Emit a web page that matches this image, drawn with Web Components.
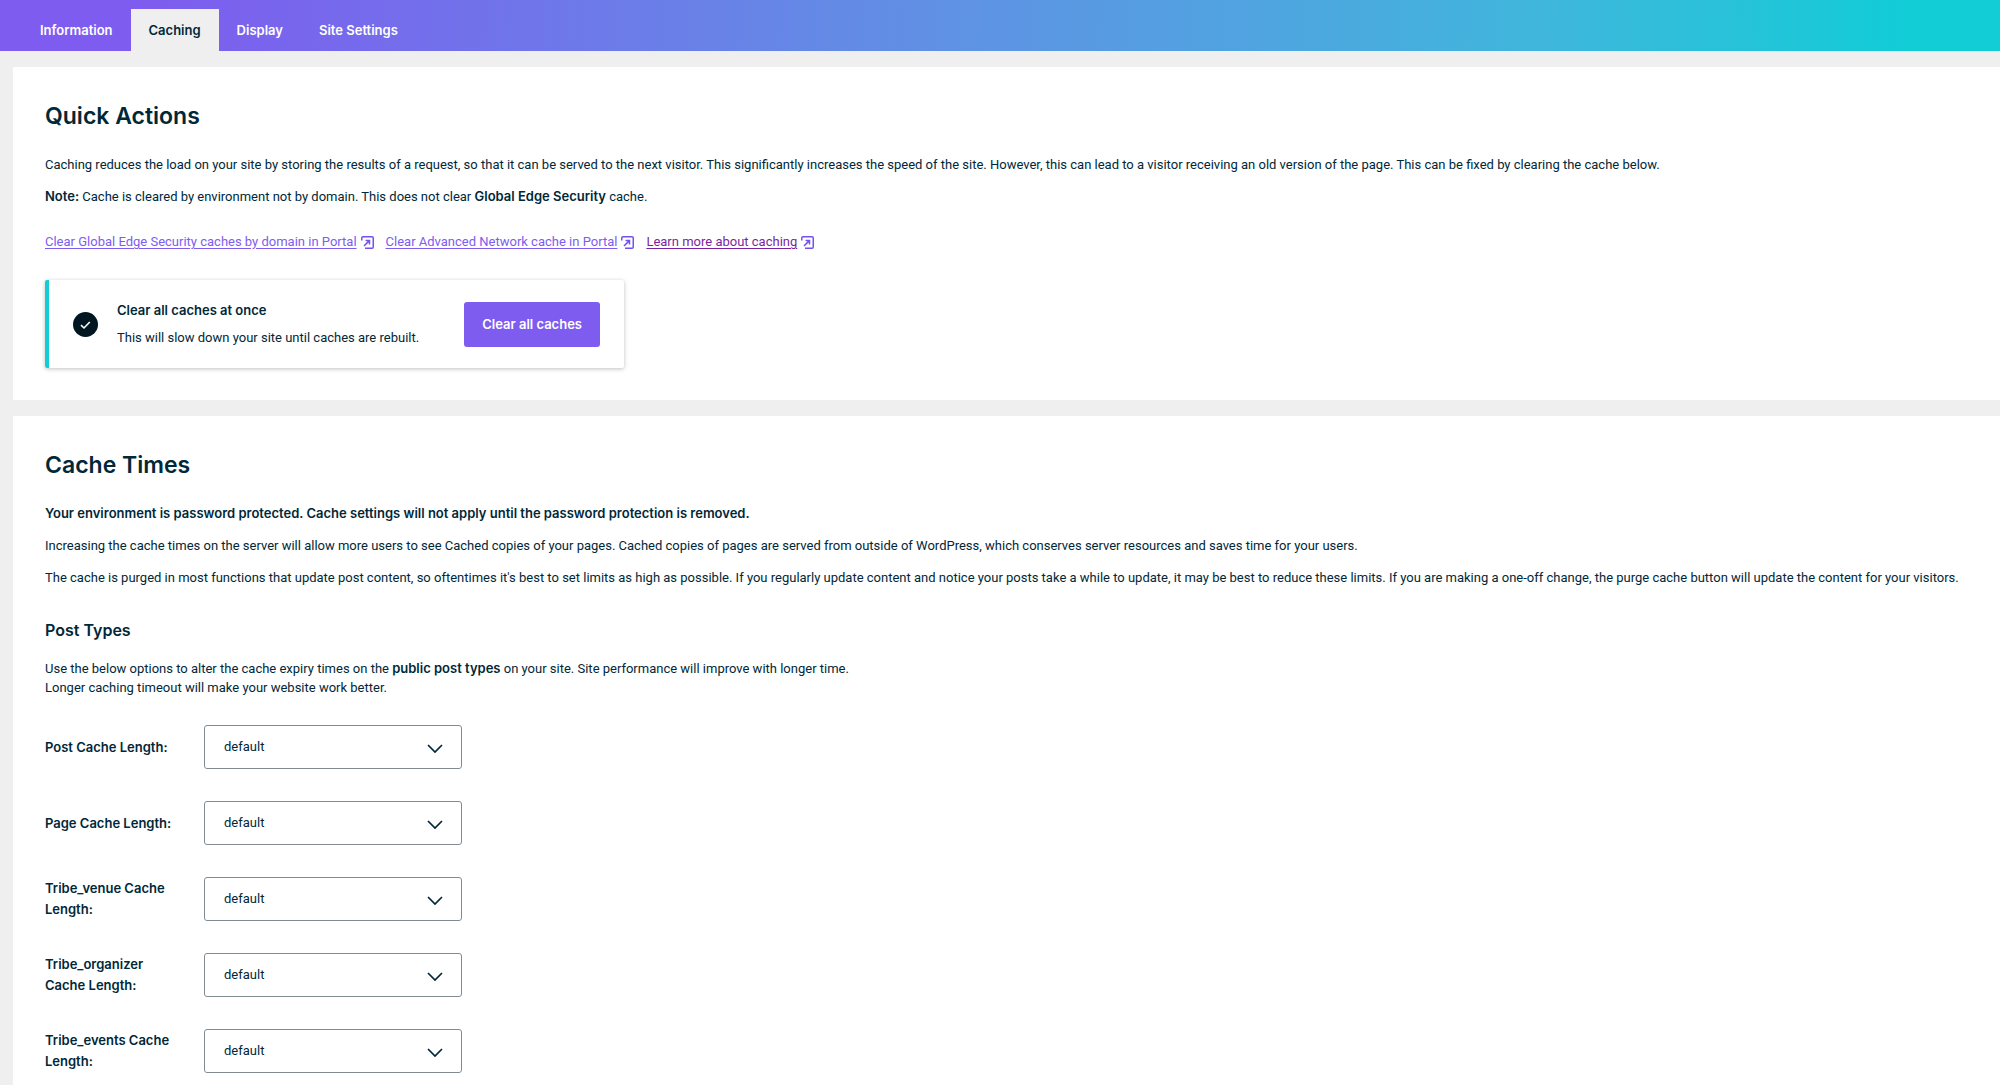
<!DOCTYPE html>
<html lang="en">
<head>
<meta charset="utf-8">
<title>Caching</title>
<style>
  body { margin: 0; background: #efefef; color: #002838; font: 400 13px/20px Roboto, "Liberation Sans", sans-serif; --bold-font: Inter, "Liberation Sans", sans-serif; }
</style>
</head>
<body>
<caching-page></caching-page>
<script>
const define = (name, html, setup) => {
  const template = document.createElement("template");
  template.innerHTML = html;
  customElements.define(name, class extends HTMLElement {
    connectedCallback() {
      if (this.shadowRoot) return;
      this.attachShadow({ mode: "open" }).append(template.content.cloneNode(true));
      if (setup) setup(this, this.shadowRoot);
    }
  });
};

define("nav-tab", `
<style>
  :host { display: block; }
  a { display: block; padding: 11px 18px; color: #fff; font-family: var(--bold-font); font-weight: 600; text-decoration: none; }
  :host([active]) a { background: #efefef; color: #002838; }
</style>
<a href="#"><slot></slot></a>`, (host, root) => {
  if (host.hasAttribute("active")) root.querySelector("a").setAttribute("aria-current", "page");
});

define("tab-bar", `
<style>
  :host { display: block; background: linear-gradient(92deg, #7e5cef 7%, #5f92e4 48%, #40b6dc 77%, #12ccd6 95%); }
  nav { display: flex; padding: 9px 22px 0; }
</style>
<nav aria-label="Sections"><slot></slot></nav>`);

define("settings-card", `
<style>
  :host { display: block; background: #fff; padding: 32px; }
  h2 { margin: 0 0 22px; font-family: var(--bold-font); font-size: 23px; line-height: 34px; font-weight: 600; }
</style>
<section><h2></h2><slot></slot></section>`, (host, root) => {
  root.querySelector("h2").textContent = host.getAttribute("heading");
});

define("portal-link", `
<style>
  :host { display: inline-flex; align-items: center; gap: 4px; color: #7e5cef; }
  a { color: inherit; text-decoration: underline; text-underline-offset: 2px; }
  :host([visited]) a { color: #7b1fa2; }
  svg { display: block; width: 13px; height: 13px; }
</style>
<a href="#"><slot></slot></a>
<svg viewBox="0 0 13 13" fill="none" stroke="#7450ee" stroke-width="1.5" aria-hidden="true">
  <path d="M.75 4.5V2Q.75.75 2 .75H11Q12.25.75 12.25 2V11Q12.25 12.25 11 12.25H4"/>
  <path d="M3 10 8.6 4.4M4.6 4.5H8.5V8.4"/>
</svg>`);

define("clear-notice", `
<style>
  :host { display: flex; align-items: center; box-sizing: border-box; max-width: 579px; min-height: 88px; padding: 20px 24px;
    border-left: 4px solid #12ccd6; border-radius: 2px; box-shadow: 0 1px 4px rgba(0,0,0,.25); }
  svg { display: block; width: 25px; height: 25px; margin-right: 19px; }
  div { flex: 1; }
  p { margin: 0; }
  p + p { margin-top: 7px; }
  strong { font-family: var(--bold-font); font-weight: 600; line-height: 1; }
  button { height: 45px; padding: 0 18px; border: 0; border-radius: 3px; background: #7e5cef; color: #fff; font: inherit; font-family: var(--bold-font); font-weight: 600; }
</style>
<svg viewBox="0 0 25 25" aria-hidden="true"><circle cx="12.5" cy="12.5" r="12.5" fill="#001722"/><path d="M8 13.2 11 16 16.8 10" fill="none" stroke="#fff" stroke-width="1.6"/></svg>
<div><p><strong>Clear all caches at once</strong></p><p>This will slow down your site until caches are rebuilt.</p></div>
<button type="button">Clear all caches</button>`);

define("cache-field", `
<style>
  :host { display: flex; align-items: center; min-height: 44px; }
  label { flex: none; box-sizing: border-box; width: 159px; padding-right: 32px; line-height: 21px; font-family: var(--bold-font); font-weight: 600; }
  .control { display: grid; width: 258px; align-items: center; }
  select, svg { grid-area: 1 / 1; }
  select { appearance: none; box-sizing: border-box; width: 100%; height: 44px; margin: 0; padding: 0 40px 0 19px; border: 1px solid #808c92;
    border-radius: 3px; background: #fff; color: inherit; font: inherit; }
  svg { justify-self: end; margin: 3px 19px 0 0; width: 16px; height: 10px; pointer-events: none; }
</style>
<label for="length"><slot></slot></label>
<span class="control">
  <select id="length"><option>default</option></select>
  <svg viewBox="0 0 16 10" fill="none" stroke="#002838" stroke-width="1.7" aria-hidden="true"><path d="M1 1 8 8 15 1"/></svg>
</span>`);

define("caching-page", `
<style>
  :host { display: flex; flex-direction: column; min-height: 100vh; }
  main { flex: 1; display: flex; flex-direction: column; gap: 16px; padding: 16px 0 0 13px; }
  p { margin: 0 0 12px; }
  strong { font-family: var(--bold-font); font-weight: 600; line-height: 1; }
  .links { display: flex; flex-wrap: wrap; gap: 12px; margin: 25px 0 28px; }
  h3 { margin: 30px 0 17px; font-family: var(--bold-font); font-size: 16px; line-height: 24px; font-weight: 600; }
  .types { line-height: 19px; margin-bottom: 28px; }
  .times { flex: 1; padding-bottom: 12px; }
  .fields { display: grid; gap: 32px; }
</style>
<tab-bar>
  <nav-tab>Information</nav-tab><nav-tab active>Caching</nav-tab><nav-tab>Display</nav-tab><nav-tab>Site Settings</nav-tab>
</tab-bar>
<main>
  <settings-card heading="Quick Actions">
    <p>Caching reduces the load on your site by storing the results of a request, so that it can be served to the next visitor. This significantly increases the speed of the site. However, this can lead to a visitor receiving an old version of the page. This can be fixed by clearing the cache below.</p>
    <p><strong>Note:</strong> Cache is cleared by environment not by domain. This does not clear <strong>Global Edge Security</strong> cache.</p>
    <div class="links">
      <portal-link>Clear Global Edge Security caches by domain in Portal</portal-link>
      <portal-link>Clear Advanced Network cache in Portal</portal-link>
      <portal-link visited>Learn more about caching</portal-link>
    </div>
    <clear-notice></clear-notice>
  </settings-card>
  <settings-card class="times" heading="Cache Times">
    <p><strong>Your environment is password protected. Cache settings will not apply until the password protection is removed.</strong></p>
    <p>Increasing the cache times on the server will allow more users to see Cached copies of your pages. Cached copies of pages are served from outside of WordPress, which conserves server resources and saves time for your users.</p>
    <p>The cache is purged in most functions that update post content, so oftentimes it's best to set limits as high as possible. If you regularly update content and notice your posts take a while to update, it may be best to reduce these limits. If you are making a one-off change, the purge cache button will update the content for your visitors.</p>
    <h3>Post Types</h3>
    <p class="types">Use the below options to alter the cache expiry times on the <strong>public post types</strong> on your site. Site performance will improve with longer time.<br>Longer caching timeout will make your website work better.</p>
    <div class="fields">
      <cache-field>Post Cache Length:</cache-field>
      <cache-field>Page Cache Length:</cache-field>
      <cache-field>Tribe_venue Cache Length:</cache-field>
      <cache-field>Tribe_organizer Cache Length:</cache-field>
      <cache-field>Tribe_events Cache Length:</cache-field>
    </div>
  </settings-card>
</main>`);
</script>
</body>
</html>
